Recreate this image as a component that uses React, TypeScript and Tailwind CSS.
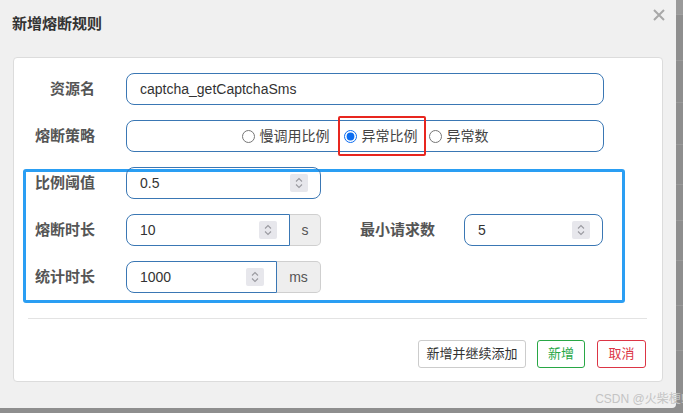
import React from "react";

const font = { fontFamily: '"Liberation Sans", "Noto Sans CJK SC", sans-serif' };

const Spinner = () => (
  <div className="flex h-[18px] w-[18px] items-center justify-center rounded-[2px] bg-[#e7e7ec]">
    <svg width="18" height="18" viewBox="0 0 18 18" fill="none">
      <path d="M6 7.5 9 4.5 12 7.5" stroke="#9a9aa0" strokeWidth="1.1" />
      <path d="M6 10.5 9 13.5 12 10.5" stroke="#9a9aa0" strokeWidth="1.1" />
    </svg>
  </div>
);

const NumberInput = ({
  value,
  width,
  addon,
  addonWidth,
}: {
  value: string;
  width: string;
  addon?: string;
  addonWidth?: string;
}) => (
  <div className="flex h-[32px]">
    <div
      className={`flex h-full items-center justify-between border border-[#3a77b4] pl-[13px] pr-[12px] text-[14px] text-[#333] ${width} ${
        addon ? "rounded-l-[8px]" : "rounded-[8px]"
      }`}
    >
      <span>{value}</span>
      <Spinner />
    </div>
    {addon && (
      <div
        className={`flex h-full items-center justify-center rounded-r-[5px] border border-l-0 border-[#cfcfcf] bg-[#eeeeee] text-[14px] text-[#555] ${addonWidth}`}
      >
        {addon}
      </div>
    )}
  </div>
);

const Radio = ({ label, checked }: { label: string; checked?: boolean }) => (
  <label className="flex items-center gap-[5px] text-[14px] text-[#444]">
    <input type="radio" checked={!!checked} readOnly className="m-0 h-[13px] w-[13px] accent-[#0b6cf0]" />
    {label}
  </label>
);

export default function App() {
  return (
    <div className="flex h-[413px] w-[683px] overflow-hidden bg-[#8e8e8e]" style={font}>
      <div className="flex h-[408px] w-[676px] shrink-0 flex-col rounded-br-[4px] bg-[#f0f0f0]">
        <div className="flex h-[58px] justify-between pl-[12px] pr-[12px]">
          <h1 className="pt-[13px] text-[15px] font-bold text-[#333]">新增熔断规则</h1>
          <svg width="14" height="14" viewBox="0 0 14 14" className="mt-[8px] mr-[-2px]">
            <path d="M2 2 12 12M12 2 2 12" stroke="#a8a8a8" strokeWidth="2" />
          </svg>
        </div>

        <div className="ml-[13px] flex w-[650px] flex-col rounded-[4px] border border-[#dcdcdc] bg-white pt-[15px] pb-[13px]">
          <div className="flex h-[32px] items-center">
            <span className="w-[81px] text-right text-[15px] font-bold text-[#555]">资源名</span>
            <div className="ml-[31px] flex h-full w-[478px] items-center rounded-[8px] border border-[#3a77b4] pl-[13px] text-[14px] text-[#333]">
              captcha_getCaptchaSms
            </div>
          </div>

          <div className="mt-[15px] flex h-[32px] items-center">
            <span className="w-[81px] text-right text-[15px] font-bold text-[#555]">熔断策略</span>
            <div className="ml-[31px] flex h-full w-[478px] items-center justify-center rounded-[8px] border border-[#3a77b4]">
              <Radio label="慢调用比例" />
              <div className="ml-[8px] flex h-[40px] items-center rounded-[2px] border-2 border-[#e8261f] pl-[4px] pr-[6px]">
                <Radio label="异常比例" checked />
              </div>
              <div className="ml-[3px]">
                <Radio label="异常数" />
              </div>
            </div>
          </div>

          <div className="ml-[9px] mt-[17px] flex w-[602px] flex-col rounded-[3px] border-[3px] border-[#2a9ef3] pb-[7px]">
            <div className="-mt-[5px] flex h-[32px] items-center">
              <span className="w-[69px] text-right text-[15px] font-bold text-[#555]">比例阈值</span>
              <div className="ml-[31px]">
                <NumberInput value="0.5" width="w-[195px]" />
              </div>
            </div>

            <div className="mt-[15px] flex h-[32px] items-center">
              <span className="w-[69px] text-right text-[15px] font-bold text-[#555]">熔断时长</span>
              <div className="ml-[31px]">
                <NumberInput value="10" width="w-[164px]" addon="s" addonWidth="w-[31px]" />
              </div>
              <span className="ml-[39px] text-[15px] font-bold text-[#555]">最小请求数</span>
              <div className="ml-[29px]">
                <NumberInput value="5" width="w-[139px]" />
              </div>
            </div>

            <div className="mt-[15px] flex h-[32px] items-center">
              <span className="w-[69px] text-right text-[15px] font-bold text-[#555]">统计时长</span>
              <div className="ml-[31px]">
                <NumberInput value="1000" width="w-[151px]" addon="ms" addonWidth="w-[44px]" />
              </div>
            </div>
          </div>

          <div className="ml-[14px] mt-[15px] h-px w-[619px] bg-[#e3e3e3]" />

          <div className="mr-[16px] mt-[21px] flex justify-end gap-[11px]">
            <button className="h-[28px] w-[108px] rounded-[3px] border border-[#cccccc] bg-white text-[13px] text-[#333]">
              新增并继续添加
            </button>
            <button className="h-[28px] w-[48px] rounded-[3px] border border-[#28a745] bg-white text-[13px] text-[#28a745]">
              新增
            </button>
            <button className="ml-[1px] h-[28px] w-[49px] rounded-[3px] border border-[#dc3545] bg-white text-[13px] text-[#dc3545]">
              取消
            </button>
          </div>
        </div>

        <div className="-mr-[8px] mt-[8px] flex justify-end">
          <span className="whitespace-nowrap text-[12px] text-[#c4c4c4]">CSDN @火柴梗!</span>
        </div>
      </div>

      <div className="flex w-[7px] flex-col">
        <div className="h-[15px] border-b border-[#a0a0a0] bg-[#9a9a9a]" />
        <div className="h-[46px] border-b border-[#9a9a9a]" />
        <div className="h-[42px] border-b border-[#9a9a9a]" />
        <div className="h-[42px] border-b border-[#9a9a9a]" />
        <div className="h-[40px] border-b border-[#9a9a9a]" />
        <div className="h-[36px] border-b border-[#9a9a9a]" />
        <div className="h-[40px] border-b border-[#9a9a9a]" />
        <div className="h-[45px] border-b border-[#9a9a9a]" />
        <div className="h-[45px] border-b border-[#9a9a9a]" />
      </div>
    </div>
  );
}
